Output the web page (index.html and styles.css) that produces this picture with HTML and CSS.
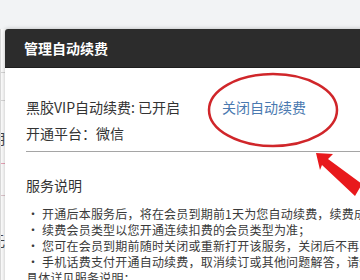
FILE: index.html
```html
<!DOCTYPE html>
<html lang="zh-CN">
<head>
    <meta charset="UTF-8">
    <meta name="viewport" content="width=device-width, initial-scale=1.0">
    <title>管理自动续费</title>
    <link rel="stylesheet" href="styles.css">
</head>
<body>
    <div class="page">
        <div class="page-top"></div>
        <div class="page-side">
            <div class="side-row first"></div>
            <div class="side-row"></div>
            <div class="side-text">明</div>
            <div class="side-row pink"></div>
            <div class="side-row soft"></div>
            <div class="side-text low">元</div>
        </div>
    </div>

    <div class="modal">
        <div class="modal-head">管理自动续费</div>
        <div class="modal-body">
            <div class="status-row">
                <span class="status">黑胶VIP自动续费: 已开启</span>
                <a class="close-link" href="#">关闭自动续费</a>
            </div>
            <div class="status-row">开通平台：微信</div>
            <div class="divider"></div>
            <div class="section-title">服务说明</div>
            <ul class="notes">
                <li>• 开通后本服务后，将在会员到期前1天为您自动续费，续费成功后将通知您</li>
                <li>• 续费会员类型以您开通连续扣费的会员类型为准；</li>
                <li>• 您可在会员到期前随时关闭或重新打开该服务，关闭后不再自动续费；</li>
                <li>• 手机话费支付开通自动续费，取消续订或其他问题解答，请短信咨询，</li>
                <li class="cont">具体详见服务说明：</li>
            </ul>
        </div>
    </div>

    <!-- annotation drawn on top of the screenshot -->
    <svg class="marks" width="360" height="280" viewBox="0 0 360 280">
        <ellipse cx="273" cy="110" rx="64" ry="36" fill="none" stroke="#d0262a" stroke-width="2.5"/>
        <polygon points="316,153 333,154 328,159 362,184 355,196 322,165 320,170" fill="#e8191c"/>
    </svg>
</body>
</html>
```

FILE: styles.css
```css
body {
    margin: 0;
    width: 360px;
    height: 280px;
    overflow: hidden;
    background: #f2f3f5;
    font-family: "Microsoft YaHei", "Noto Sans CJK SC", sans-serif;
    color: #333;
}

.page-top {
    height: 29px;
    background: #f2f3f5;
}

.page-side {
    width: 6px;
    height: 251px;
    background: #fbfbfb;
    border-left: 1px solid #d8d8d8;
    overflow: hidden;
    box-sizing: border-box;
}

.side-row {
    height: 1px;
    margin-top: 27px;
    background: #d6d6d6;
}

.side-row.first {
    margin-top: 43px;
}

.side-row.pink {
    background: #e7a3b6;
    margin-top: 16px;
}

.side-row.soft {
    background: #dcc4cb;
    margin-top: 31px;
}

.side-text {
    margin: 28px 0 0 -10px;
    font-size: 14px;
    line-height: 18px;
    color: #444;
}

.side-text.low {
    margin-top: 35px;
}

.modal {
    position: absolute;
    left: 5px;
    top: 29px;
    width: 620px;
    height: 300px;
    background: #fff;
    border-radius: 3px 3px 0 0;
    box-shadow: 0 0 4px rgba(0, 0, 0, 0.25);
}

.modal-head {
    height: 38px;
    padding-left: 19px;
    background: #2c2c2c;
    border-bottom: 1px solid #1e1e1e;
    border-radius: 3px 3px 0 0;
    color: #fff;
    font-size: 14px;
    font-weight: bold;
    line-height: 38px;
}

.modal-body {
    padding: 26px 0 0 21px;
}

.status-row {
    display: flex;
    font-size: 14px;
    line-height: 26px;
    color: #333;
}

.status {
    width: 196px;
}

.close-link {
    color: #4a79b0;
    text-decoration: none;
}

.divider {
    height: 1px;
    margin-top: 5px;
    background: #a5a5a5;
}

.section-title {
    margin-top: 20px;
    font-size: 14px;
    line-height: 26px;
}

.notes {
    list-style: none;
    margin: 8px 0 0;
    padding: 0;
    font-size: 12px;
    line-height: 16px;
    letter-spacing: 0.2px;
    color: #3a3a3a;
    white-space: nowrap;
}

.notes li {
    padding-left: 1px;
}

.notes .cont {
    padding-left: 0;
}

.marks {
    position: absolute;
    left: 0;
    top: 0;
}
```
